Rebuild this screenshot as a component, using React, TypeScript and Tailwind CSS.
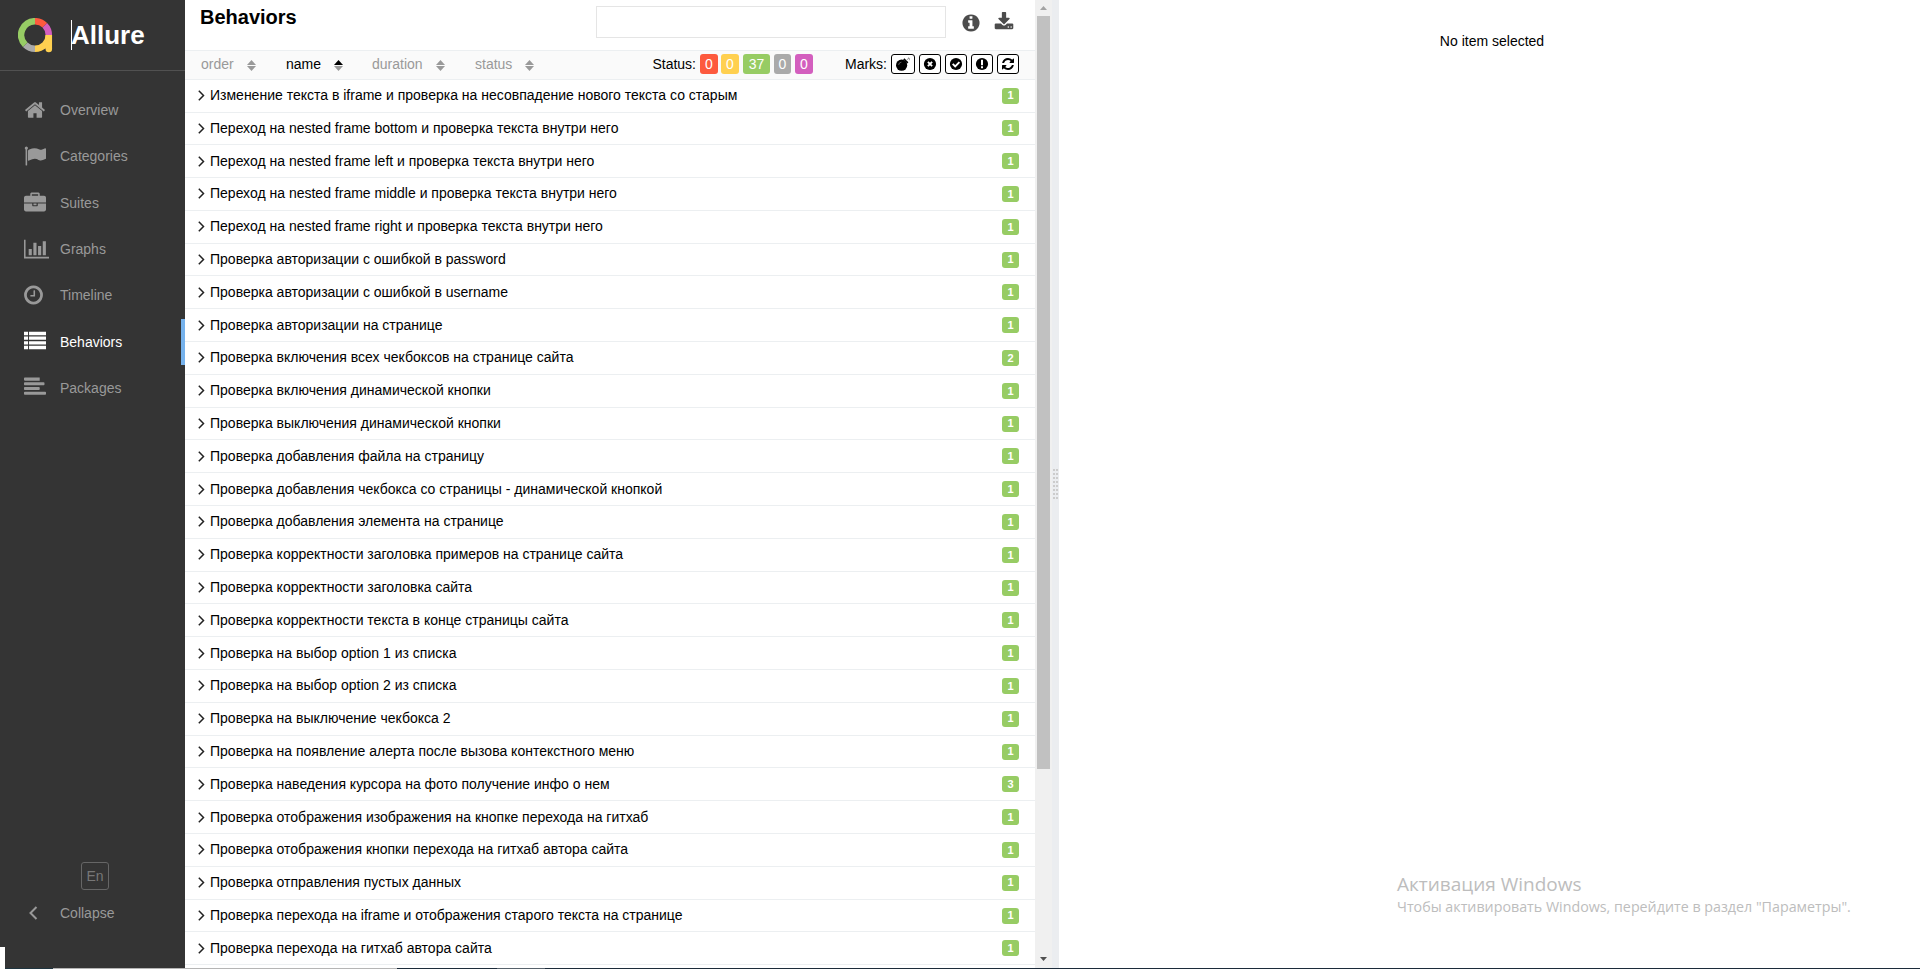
import React from 'react';

const HOME = 'M1472 992v480q0 26-19 45t-45 19h-384v-384h-256v384h-384q-26 0-45-19t-19-45v-480q0-1 .5-3t.5-3l575-474 575 474q1 2 1 6zm223-69l-62 74q-8 9-21 11h-3q-13 0-21-7l-692-577-692 577q-12 8-24 7-13-2-21-11l-62-74q-8-10-7-23.5t11-21.5l719-599q32-26 76-26t76 26l244 204v-195q0-14 9-23t23-9h192q14 0 23 9t9 23v408l219 182q10 8 11 21.5t-7 23.5z';
const FLAG = 'M320 256q0 72-64 110v1266q0 13-9.5 22.5t-22.5 9.5h-64q-13 0-22.5-9.5t-9.5-22.5v-1266q-64-38-64-110 0-53 37.5-90.5t90.5-37.5 90.5 37.5 37.5 90.5zm1472 64v763q0 25-12.5 38.5t-39.5 27.5q-215 116-369 116-61 0-123.5-22t-108.5-48-115.5-48-142.5-22q-192 0-464 146-17 9-33 9-26 0-45-19t-19-45v-742q0-32 31-55 21-14 79-43 236-120 421-120 107 0 200 29t219 88q38 19 88 19 54 0 117.5-21t110-47 88-47 54.5-21q26 0 45 19t19 45z';
const BRIEFCASE = 'M640 256h512v-128h-512v128zm1152 640v480q0 66-47 113t-113 47h-1472q-66 0-113-47t-47-113v-480h672v160q0 26 19 45t45 19h320q26 0 45-19t19-45v-160h672zm-768 0v128h-256v-128h256zm768-480v384h-1792v-384q0-66 47-113t113-47h352v-160q0-40 28-68t68-28h576q40 0 68 28t28 68v160h352q66 0 113 47t47 113z';
const CHART = 'M640 896v512h-256v-512zM1024 384v1024h-256v-1024zM2048 1536v128h-2048v-1536h128v1408zM1408 640v768h-256v-768zM1792 256v1152h-256v-1152z';
const CLOCK = 'M1024 544v448q0 14-9 23t-23 9h-320q-14 0-23-9t-9-23v-64q0-14 9-23t23-9h224v-352q0-14 9-23t23-9h64q14 0 23 9t9 23zm416 352q0-148-73-273t-198-198-273-73-273 73-198 198-73 273 73 273 198 198 273 73 273-73 198-198 73-273zm224 0q0 209-103 385.5t-279.5 279.5-385.5 103-385.5-103-279.5-279.5-103-385.5 103-385.5 279.5-279.5 385.5-103 385.5 103 279.5 279.5 103 385.5z';
const LIST = 'M0 140h330v280H0zM410 140h1382v280H410zM0 524h330v280H0zM410 524h1382v280H410zM0 908h330v280H0zM410 908h1382v280H410zM0 1292h330v280H0zM410 1292h1382v280H410z';
const ALIGN = 'M64 128h1216v250H64q-64 0-64-64v-122q0-64 64-64zM64 512h1540q64 0 64 64v122q0 64-64 64H64q-64 0-64-64v-122q0-64 64-64zM64 896h1152q64 0 64 64v122q0 64-64 64H64q-64 0-64-64v-122q0-64 64-64zM64 1280h1664q64 0 64 64v122q0 64-64 64H64q-64 0-64-64v-122q0-64 64-64z';
const INFO = 'M1152 1376v-160q0-14-9-23t-23-9h-96v-512q0-14-9-23t-23-9h-320q-14 0-23 9t-9 23v160q0 14 9 23t23 9h96v320h-96q-14 0-23 9t-9 23v160q0 14 9 23t23 9h448q14 0 23-9t9-23zm-128-896v-160q0-14-9-23t-23-9h-192q-14 0-23 9t-9 23v160q0 14 9 23t23 9h192q14 0 23-9t9-23zm640 416q0 209-103 385.5t-279.5 279.5-385.5 103-385.5-103-279.5-279.5-103-385.5 103-385.5 279.5-279.5 385.5-103 385.5 103 279.5 279.5 103 385.5z';
const DOWNLOAD = 'M1344 1344q0-26-19-45t-45-19-45 19-19 45 19 45 45 19 45-19 19-45zm256 0q0-26-19-45t-45-19-45 19-19 45 19 45 45 19 45-19 19-45zm128-224v320q0 40-28 68t-68 28h-1472q-40 0-68-28t-28-68v-320q0-40 28-68t68-28h465l135 136q58 56 136 56t136-56l136-136h464q40 0 68 28t28 68zm-325-569q17 41-14 70l-448 448q-18 19-45 19t-45-19l-448-448q-31-29-14-70 17-39 59-39h256v-448q0-26 19-45t45-19h256q26 0 45 19t19 45v448h256q42 0 59 39z';
const REFRESH = 'M1639 1056q0 5-1 7-64 268-268 434.5t-478 166.5q-146 0-282.5-55t-243.5-157l-129 129q-19 19-45 19t-45-19-19-45v-448q0-26 19-45t45-19h448q26 0 45 19t19 45-19 45l-137 137q71 66 161 102t187 36q134 0 250-65t186-179q11-17 53-117 8-23 30-23h192q13 0 22.5 9.5t9.5 22.5zm25-800v448q0 26-19 45t-45 19h-448q-26 0-45-19t-19-45 19-45l138-138q-148-137-349-137-134 0-250 65t-186 179q-11 17-53 117-8 23-30 23h-199q-13 0-22.5-9.5t-9.5-22.5v-7q65-268 270-434.5t480-166.5q146 0 284 55.5t245 156.5l130-129q19-19 45-19t45 19 19 45z';

const nav = [
  { label: 'Overview', path: HOME, box: '0 0 1792 1792', w: 'w-[22px]' },
  { label: 'Categories', path: FLAG, box: '0 0 1792 1792', w: 'w-[22px]' },
  { label: 'Suites', path: BRIEFCASE, box: '0 -128 1792 1792', w: 'w-[22px]' },
  { label: 'Graphs', path: CHART, box: '0 0 2048 1792', w: 'w-[25px]' },
  { label: 'Timeline', path: CLOCK, box: '128 0 1536 1792', w: 'w-[19px]' },
  { label: 'Behaviors', path: LIST, box: '0 0 1792 1792', w: 'w-[22px]', active: true },
  { label: 'Packages', path: ALIGN, box: '0 0 1792 1792', w: 'w-[22px]' },
];

const rows: [string, number][] = [
  ['Изменение текста в iframe и проверка на несовпадение нового текста со старым', 1],
  ['Переход на nested frame bottom и проверка текста внутри него', 1],
  ['Переход на nested frame left и проверка текста внутри него', 1],
  ['Переход на nested frame middle и проверка текста внутри него', 1],
  ['Переход на nested frame right и проверка текста внутри него', 1],
  ['Проверка авторизации с ошибкой в password', 1],
  ['Проверка авторизации с ошибкой в username', 1],
  ['Проверка авторизации на странице', 1],
  ['Проверка включения всех чекбоксов на странице сайта', 2],
  ['Проверка включения динамической кнопки', 1],
  ['Проверка выключения динамической кнопки', 1],
  ['Проверка добавления файла на страницу', 1],
  ['Проверка добавления чекбокса со страницы - динамической кнопкой', 1],
  ['Проверка добавления элемента на странице', 1],
  ['Проверка корректности заголовка примеров на странице сайта', 1],
  ['Проверка корректности заголовка сайта', 1],
  ['Проверка корректности текста в конце страницы сайта', 1],
  ['Проверка на выбор option 1 из списка', 1],
  ['Проверка на выбор option 2 из списка', 1],
  ['Проверка на выключение чекбокса 2', 1],
  ['Проверка на появление алерта после вызова контекстного меню', 1],
  ['Проверка наведения курсора на фото получение инфо о нем', 3],
  ['Проверка отображения изображения на кнопке перехода на гитхаб', 1],
  ['Проверка отображения кнопки перехода на гитхаб автора сайта', 1],
  ['Проверка отправления пустых данных', 1],
  ['Проверка перехода на iframe и отображения старого текста на странице', 1],
  ['Проверка перехода на гитхаб автора сайта', 1],
];

function Logo() {
  return (
    <svg className="h-[35px] w-[35px] shrink-0" viewBox="0 0 35 35" fill="none" strokeWidth="6.5">
      <path d="M17 3.2A13.8 13.8 0 0 1 26.8 7.2" stroke="#fd5a3e" />
      <path d="M26.8 7.2A13.8 13.8 0 0 1 30.8 17" stroke="#d35ebe" />
      <path d="M17 30.8A13.8 13.8 0 0 0 30.8 17" stroke="#ffd050" />
      <path d="M30.8 17V31" stroke="#ffd050" />
      <circle cx="30.8" cy="31" r="3.25" fill="#ffd050" stroke="none" />
      <path d="M17 30.8A13.8 13.8 0 0 1 7.2 26.8" stroke="#aaaaaa" />
      <path d="M7.2 26.8A13.8 13.8 0 0 1 17 3.2" stroke="#97cc64" />
    </svg>
  );
}

function Sidebar() {
  return (
    <aside className="flex w-[185px] shrink-0 flex-col bg-[#343434] text-[14px] text-[#999]">
      <div className="flex h-[71px] shrink-0 items-center border-b border-[#515151] pl-[18px]">
        <Logo />
        <div className="ml-[18px] h-[30px] w-px bg-white" />
        <span className="-ml-px text-[26px] font-bold leading-[30px] text-white">Allure</span>
      </div>
      <nav className="flex flex-col pt-[16.5px]">
        {nav.map((n) => (
          <div key={n.label} className={n.active ? 'flex h-[46.3px] items-center border-r-4 border-[#76b2ec] pl-6 text-white' : 'flex h-[46.3px] items-center pl-6'}>
            <div className="w-9 shrink-0 pb-[2px]">
              <svg className={`h-[22px] ${n.w}`} viewBox={n.box} fill="currentColor"><path d={n.path} /></svg>
            </div>
            <span>{n.label}</span>
          </div>
        ))}
      </nav>
      <div className="mt-auto flex flex-col pb-[20px]">
        <div className="ml-[81px] flex h-[28px] w-[28px] items-center justify-center rounded-[3px] border border-[#666] text-[#777]">En</div>
        <div className="mt-[9px] flex h-[28px] items-center pl-[29px]">
          <svg className="h-[14px] w-[9px]" viewBox="0 0 9 14" fill="none" stroke="currentColor" strokeWidth="2"><path d="M7.5 1L1.5 7l6 6" /></svg>
          <span className="ml-[22px]">Collapse</span>
        </div>
      </div>
      <div className="h-[21px] w-[5px] shrink-0 bg-white" />
    </aside>
  );
}

function Sorter({ label, gap, active }: { label: string; gap: string; active?: boolean }) {
  return (
    <div className={`flex items-center ${gap} ${active ? 'text-black' : 'text-[#999]'}`}>
      <span>{label}</span>
      <svg className="ml-[13px] mt-[2px] h-[11px] w-[9px]" viewBox="0 0 9 11">
        <path d="M0 4.9L4.5 0 9 4.9z" fill={active ? '#000' : '#999'} />
        <path d="M0 6.1L4.5 11 9 6.1z" fill="#999" />
      </svg>
    </div>
  );
}

function Mark({ children, w = 'w-[22px]' }: { children: React.ReactNode; w?: string }) {
  return (
    <div className={`flex h-5 items-center justify-center rounded-[3px] border border-black bg-white ${w}`}>
      <svg className="h-[14px] w-[14px]" viewBox="0 0 14 14">{children}</svg>
    </div>
  );
}

function Toolbar() {
  return (
    <div className="flex h-[30px] shrink-0 items-center border-y border-[#eceff1] bg-[#fafafa] pb-[2px] pl-4 pr-4 text-[14px]">
      <Sorter label="order" gap="w-[85px]" />
      <Sorter label="name" gap="w-[86px]" active />
      <Sorter label="duration" gap="w-[103px]" />
      <Sorter label="status" gap="" />
      <div className="ml-auto flex items-center text-white">
        <span className="mr-[4px] text-black">Status:</span>
        <span className="flex h-5 w-[18px] items-center justify-center rounded-[3px] bg-[#fd5a3e]">0</span>
        <span className="ml-[3px] flex h-5 w-[18px] items-center justify-center rounded-[3px] bg-[#ffd050]">0</span>
        <span className="ml-1 flex h-5 w-[27px] items-center justify-center rounded-[3px] bg-[#97cc64]">37</span>
        <span className="ml-1 flex h-5 w-[17px] items-center justify-center rounded-[3px] bg-[#aaa]">0</span>
        <span className="ml-1 flex h-5 w-[18px] items-center justify-center rounded-[3px] bg-[#d35ebe]">0</span>
      </div>
      <div className="ml-8 flex items-center gap-1">
        <span>Marks:</span>
        <Mark w="w-6">
          <circle cx="5.6" cy="8.2" r="5.6" />
          <path d="M7.2 2.4l4 4 1.2-1.2-4-4z" />
          <path d="M10.5 3.6l1.6-2.2h1.5M12.5.5l1.2 2.8" fill="none" stroke="#888" strokeWidth=".8" />
          <path d="M2.6 8a3 3 0 0 1 2.8-2.8" fill="none" stroke="#999" strokeWidth=".6" />
        </Mark>
        <Mark><circle cx="7" cy="7" r="6.1" /><path d="M4.9 4.9l4.2 4.2M9.1 4.9L4.9 9.1" stroke="#fff" strokeWidth="1.9" /></Mark>
        <Mark><circle cx="7" cy="7" r="6.1" /><path d="M3.7 6.9l2.5 2.5 4.2-4.2" fill="none" stroke="#fff" strokeWidth="1.9" /></Mark>
        <Mark><circle cx="7" cy="7" r="6.1" /><path d="M7 2.8v5.4M7 9.2v2" stroke="#fff" strokeWidth="2" /></Mark>
        <Mark><path transform="scale(.0078125)" d={REFRESH} /></Mark>
      </div>
    </div>
  );
}

export default function App() {
  return (
    <div className="flex h-[969px] w-[1920px] flex-col overflow-hidden bg-white font-['Liberation_Sans',Arial,sans-serif] text-black">
      <div className="flex h-[968px] shrink-0">
        <Sidebar />
        <main className="flex w-[850px] shrink-0 flex-col overflow-hidden">
          <div className="flex h-[50px] shrink-0 items-start pl-[15px]">
            <h1 className="w-[396px] pt-[5px] text-[20px] font-bold leading-6">Behaviors</h1>
            <div className="mt-[6px] h-8 w-[350px] border border-[#e5e5e5]" />
            <svg className="ml-[15px] mt-[13px] h-[20px] w-[20px] text-[#4c4c4c]" viewBox="0 0 1792 1792" fill="currentColor"><path d={INFO} /></svg>
            <svg className="ml-[13px] mt-[12px] h-[20px] w-[20px] text-[#4c4c4c]" viewBox="0 0 1792 1792" fill="currentColor"><path d={DOWNLOAD} /></svg>
          </div>
          <Toolbar />
          <div className="-mt-[0.3px] flex flex-col">
            {rows.map(([label, count]) => (
              <div key={label} className="flex h-[32.8px] shrink-0 items-center border-b border-[#eceff1] pl-[13px] pr-4 text-[14px]">
                <svg className="h-[11px] w-[7px]" viewBox="0 0 7 11" fill="none" stroke="#222" strokeWidth="1.5"><path d="M.8.8L5.5 5.5.8 10.2" /></svg>
                <span className="ml-[5px] whitespace-nowrap">{label}</span>
                <span className="ml-auto flex h-4 w-[17px] items-center justify-center rounded-[3px] bg-[#97cc64] text-[11px] font-bold text-white">{count}</span>
              </div>
            ))}
          </div>
        </main>
        <div className="flex w-[17px] shrink-0 flex-col items-center bg-[#f0f0f0]">
          <svg className="mt-[6px] h-[4px] w-[7px]" viewBox="0 0 7 4"><path d="M0 4L3.5 0 7 4z" fill="#a3a3a3" /></svg>
          <div className="mt-[6px] h-[753px] w-[13px] bg-[#c1c1c1]" />
          <svg className="mb-[7px] mt-auto h-[4px] w-[7px]" viewBox="0 0 7 4"><path d="M0 0L3.5 4 7 0z" fill="#505050" /></svg>
        </div>
        <div className="flex w-[7px] shrink-0 items-center bg-[#ebedf0] pl-px">
          <div className="grid grid-cols-2 gap-x-[1px] gap-y-[2px]">
            {Array.from({ length: 16 }, (_, i) => <div key={i} className="h-[2px] w-[2px] bg-[#ccc]" />)}
          </div>
        </div>
        <section className="flex grow flex-col">
          <div className="pl-[5px] pt-[31px] text-center text-[14px] leading-5">No item selected</div>
          <div className="mt-auto pb-[51px] pl-[338px] font-['Open_Sans','Noto_Sans',sans-serif] text-[#bdbdbd]">
            <div className="whitespace-nowrap text-[19px] leading-[26px]">Активация Windows</div>
            <div className="whitespace-nowrap text-[14.27px] leading-[20px]">Чтобы активировать Windows, перейдите в раздел "Параметры".</div>
          </div>
        </section>
      </div>
      <div className="flex h-px shrink-0">
        <div className="w-[5px] bg-white" />
        <div className="w-[48px] bg-[#1f3540]" />
        <div className="w-[344px] bg-[#b5b5b5]" />
        <div className="w-[100px] bg-[#1c2b3a]" />
        <div className="w-[48px] bg-[#56616b]" />
        <div className="grow bg-[#1c2b3a]" />
      </div>
    </div>
  );
}
